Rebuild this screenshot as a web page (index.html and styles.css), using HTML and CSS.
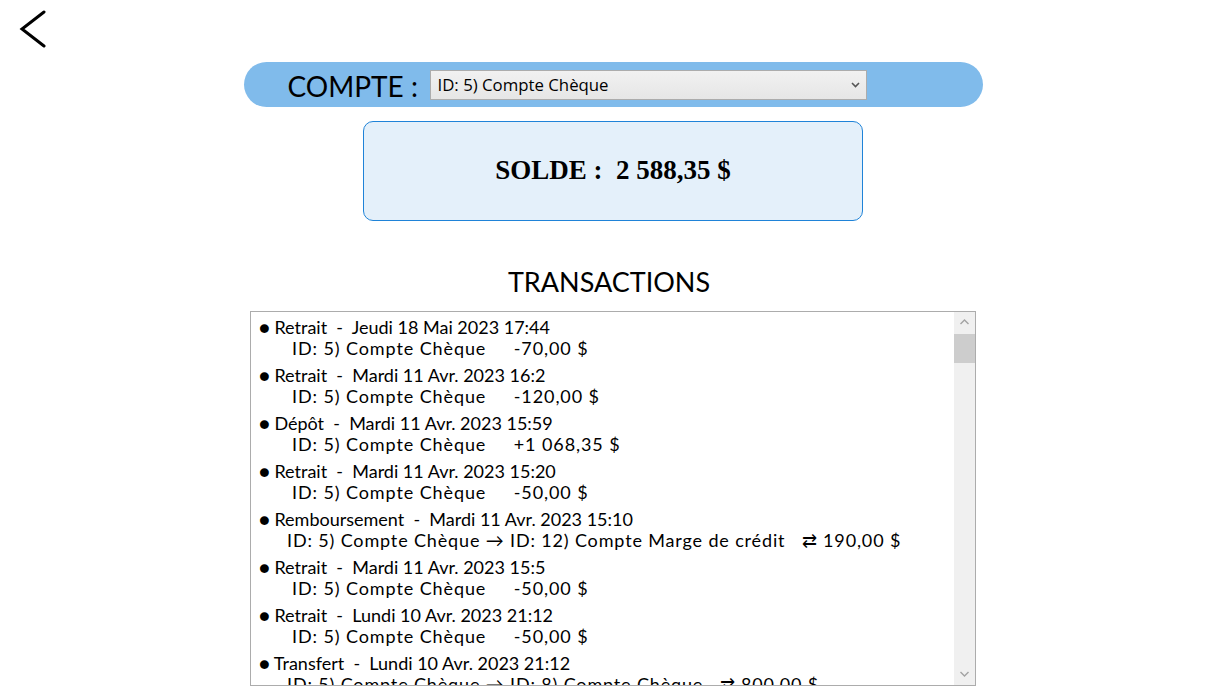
FILE: index.html
```html
<!DOCTYPE html>
<html lang="fr">
<head>
<meta charset="utf-8">
<title>Compte</title>
<link rel="stylesheet" href="styles.css">
</head>
<body>
<div class="page">
  <div class="topbar">
    <button class="back" aria-label="Retour">
      <svg width="30" height="40" viewBox="0 0 30 40"><path d="M25 2 L3 19 L25 36" fill="none" stroke="#000" stroke-width="3" stroke-linecap="round" stroke-linejoin="miter"/></svg>
    </button>
  </div>
  <main class="content">
    <div class="account-bar">
      <span class="account-label">COMPTE :</span>
      <div class="select-wrap">
        <select class="account-select">
          <option>ID: 5) Compte Chèque</option>
        </select>
        <svg class="select-arrow" width="9" height="6" viewBox="0 0 9 6"><path d="M1 1 L4.5 4.5 L8 1" fill="none" stroke="#555" stroke-width="1.6"/></svg>
      </div>
    </div>
    <div class="balance">SOLDE :&nbsp; 2 588,35 $</div>
    <h2 class="section-title">TRANSACTIONS</h2>
    <div class="list-box">
      <ul class="tx-list">
        <li class="tx"><div class="tx-head">● Retrait&nbsp; -&nbsp; Jeudi 18 Mai 2023 17:44</div><div class="tx-detail">ID: 5) Compte Chèque&nbsp;&nbsp;&nbsp;&nbsp; -70,00 $</div></li>
        <li class="tx"><div class="tx-head">● Retrait&nbsp; -&nbsp; Mardi 11 Avr. 2023 16:2</div><div class="tx-detail">ID: 5) Compte Chèque&nbsp;&nbsp;&nbsp;&nbsp; -120,00 $</div></li>
        <li class="tx"><div class="tx-head">● Dépôt&nbsp; -&nbsp; Mardi 11 Avr. 2023 15:59</div><div class="tx-detail">ID: 5) Compte Chèque&nbsp;&nbsp;&nbsp;&nbsp; +1 068,35 $</div></li>
        <li class="tx"><div class="tx-head">● Retrait&nbsp; -&nbsp; Mardi 11 Avr. 2023 15:20</div><div class="tx-detail">ID: 5) Compte Chèque&nbsp;&nbsp;&nbsp;&nbsp; -50,00 $</div></li>
        <li class="tx"><div class="tx-head">● Remboursement&nbsp; -&nbsp; Mardi 11 Avr. 2023 15:10</div><div class="tx-detail wide">ID: 5) Compte Chèque → ID: 12) Compte Marge de crédit&nbsp;&nbsp; ⇄ 190,00 $</div></li>
        <li class="tx"><div class="tx-head">● Retrait&nbsp; -&nbsp; Mardi 11 Avr. 2023 15:5</div><div class="tx-detail">ID: 5) Compte Chèque&nbsp;&nbsp;&nbsp;&nbsp; -50,00 $</div></li>
        <li class="tx"><div class="tx-head">● Retrait&nbsp; -&nbsp; Lundi 10 Avr. 2023 21:12</div><div class="tx-detail">ID: 5) Compte Chèque&nbsp;&nbsp;&nbsp;&nbsp; -50,00 $</div></li>
        <li class="tx"><div class="tx-head">● Transfert&nbsp; -&nbsp; Lundi 10 Avr. 2023 21:12</div><div class="tx-detail wide">ID: 5) Compte Chèque → ID: 8) Compte Chèque&nbsp;&nbsp; ⇄ 800,00 $</div></li>
      </ul>
      <div class="scrollbar">
        <svg class="sb-arrow" width="17" height="22" viewBox="0 0 17 22"><path d="M4.5 12 L8.5 8 L12.5 12" fill="none" stroke="#a3a3a3" stroke-width="1.4"/></svg>
        <div class="sb-thumb"></div>
        <div class="sb-track"></div>
        <svg class="sb-arrow" width="17" height="22" viewBox="0 0 17 22"><path d="M4.5 9 L8.5 13 L12.5 9" fill="none" stroke="#a3a3a3" stroke-width="1.4"/></svg>
      </div>
    </div>
  </main>
</div>
</body>
</html>
```

FILE: styles.css
```css
* { box-sizing: border-box; }
html, body { margin: 0; padding: 0; background: #fff; }
body {
  width: 1222px;
  height: 692px;
  overflow: hidden;
  font-family: "Lato", "DejaVu Sans", sans-serif;
  color: #000;
}
.page { display: flex; flex-direction: column; }
.topbar { height: 62px; padding: 10px 0 0 19px; }
.back {
  border: 0; background: none; padding: 0; margin: 0;
  width: 30px; height: 40px; display: block; cursor: pointer;
}
.back svg { display: block; }
.content {
  display: flex; flex-direction: column; align-items: center;
  padding-left: 4px;
}
.account-bar {
  width: 739px; height: 45px;
  background: #80bbeb;
  border-radius: 23px;
  display: flex; align-items: center;
  padding-left: 44px;
}
.account-label {
  font-family: "Lato", sans-serif;
  font-size: 28px;
  width: 142px;
  line-height: 1;
  padding-top: 2px;
}
.select-wrap { position: relative; width: 437px; height: 30px; }
.account-select {
  -webkit-appearance: none; appearance: none;
  width: 100%; height: 100%;
  border: 1px solid #acacac;
  background: linear-gradient(#f1f1f1, #e6e6e6);
  font-family: "Open Sans", "Noto Sans", sans-serif;
  font-size: 16.8px;
  color: #000;
  padding: 0 0 0 7px;
  border-radius: 0;
  outline: none;
}
.select-arrow { position: absolute; right: 7px; top: 12px; pointer-events: none; }
.balance {
  margin-top: 14px;
  width: 500px; height: 100px;
  background: #e4f0fa;
  border: 1px solid #1f83d8;
  border-radius: 10px;
  display: flex; align-items: center; justify-content: center;
  font-family: "Liberation Serif", "DejaVu Serif", serif;
  font-weight: bold;
  font-size: 27px;
  padding-bottom: 1px;
}
.section-title {
  margin: 44px 0 0 -8px;
  height: 46px;
  font-family: "Lato", sans-serif;
  font-weight: normal;
  font-size: 27px;
  line-height: 34px;
}
.list-box {
  width: 726px; height: 375px;
  border: 1px solid #acacac;
  display: flex;
}
.tx-list {
  flex: 1;
  list-style: none;
  margin: 0; padding: 5px 0 0 8px;
  overflow: hidden;
  font-family: "Lato", sans-serif;
  font-size: 18px;
  line-height: 21px;
}
.tx { margin-bottom: 6px; white-space: nowrap; }
.tx-detail { padding-left: 33px; letter-spacing: 0.9px; }
.tx-detail.wide { padding-left: 28px; letter-spacing: 0.85px; }
.scrollbar {
  width: 21px;
  background: #f0f0f0;
  display: flex; flex-direction: column;
  align-items: center;
}
.sb-arrow { display: block; flex: none; }
.sb-thumb { width: 21px; height: 29px; background: #cdcdcd; flex: none; }
.sb-track { flex: 1; }
```
